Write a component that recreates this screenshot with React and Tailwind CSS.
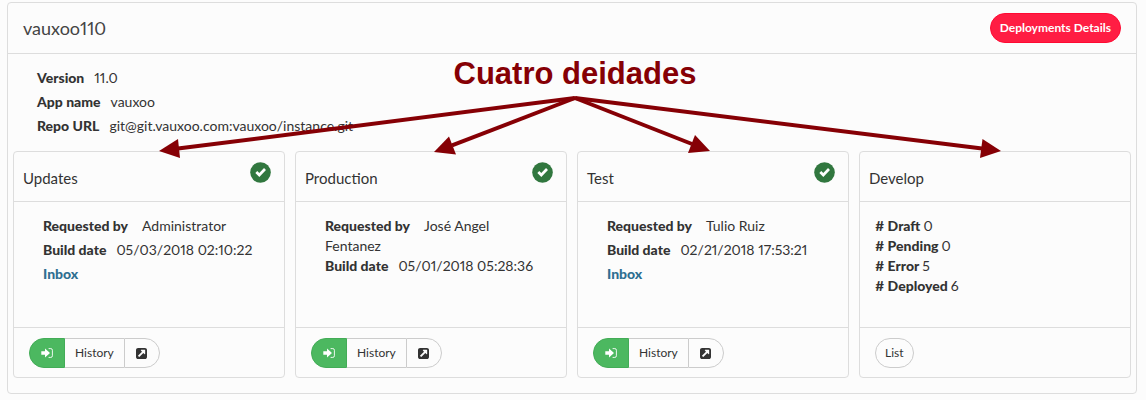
import React from 'react';

const environments = [
  {
    name: 'Updates',
    requestedBy: 'Administrator',
    buildDate: '05/03/2018 02:10:22',
    inbox: true,
  },
  {
    name: 'Production',
    requestedBy: 'José Angel Fentanez',
    buildDate: '05/01/2018 05:28:36',
    inbox: false,
  },
  {
    name: 'Test',
    requestedBy: 'Tulio Ruiz',
    buildDate: '02/21/2018 17:53:21',
    inbox: true,
  },
];

const developCounts = [
  { label: '# Draft', value: 0 },
  { label: '# Pending', value: 0 },
  { label: '# Error', value: 5 },
  { label: '# Deployed', value: 6 },
];

const arrows = [
  { line: '575,98 178,148.6', head: '159,151 178,139 180,158' },
  { line: '575,98 452,145.4', head: '434,152 449,136.5 456,154.5' },
  { line: '575,98 692,144', head: '710,151 695,135 688,153' },
  { line: '575,98 982,148.6', head: '1001,151 982.5,139 980,158' },
];

const CheckBadge = () => (
  <svg viewBox="0 0 21 21" className="size-[21px] shrink-0" role="img" aria-label="Deployed">
    <circle cx="10.5" cy="10.5" r="10.3" fill="#31773f" />
    <path d="M6.3 10 L9.3 13 L15 7" fill="none" stroke="#fff" strokeWidth="2.7" />
  </svg>
);

const SignInIcon = () => (
  <svg viewBox="0 0 12 10" className="h-2.5 w-3">
    <path d="M0.3 3.2 H4 V0.4 L9 5 L4 9.6 V6.8 H0.3 Z" fill="currentColor" />
    <path
      d="M7.6 0.6 H9.8 Q11.4 0.6 11.4 2.2 V7.8 Q11.4 9.4 9.8 9.4 H7.6"
      fill="none"
      stroke="currentColor"
      strokeWidth="0.9"
    />
  </svg>
);

const ExternalIcon = () => (
  <svg viewBox="0 0 1536 1536" className="size-[11px]" fill="currentColor">
    <path d="M1280 800V320q0-26-19-45t-45-19H736q-42 0-59 39-17 41 14 70l144 144-534 534q-19 19-19 45t19 45l102 102q19 19 45 19t45-19l534-534 144 144q18 19 45 19 12 0 25-5 39-17 39-59zm256-512v960q0 119-84.500 203.500T1248 1536H288q-119 0-203.500-84.500T0 1248V288Q0 169 84.500 84.500T288 0h960q119 0 203.500 84.500T1536 288z" />
  </svg>
);

const Field = ({ label, value, gap = 'mr-2.5' }) => (
  <p>
    <strong className={`font-black ${gap}`}>{label}</strong>
    {value}
  </p>
);

const Card = ({ title, badge, children, footer }) => (
  <section className="flex flex-col rounded border border-[#ddd]">
    <header className="flex h-[50px] items-start justify-between border-b border-[#ddd] pt-2.5 pr-[13px] pl-[9px]">
      <h2 className="pt-1.5 text-[15px] leading-5">{title}</h2>
      {badge}
    </header>
    <div className="min-h-[125px] grow">{children}</div>
    <footer className="flex border-t border-[#ddd] px-[15px] pt-2.5 pb-[9px]">{footer}</footer>
  </section>
);

const EnvironmentCard = ({ env }) => (
  <Card
    title={env.name}
    badge={<CheckBadge />}
    footer={
      <div className="flex h-[30px] text-xs">
        <button
          type="button"
          aria-label="Log in"
          className="flex w-9 items-center justify-center rounded-l-full border border-[#43ac57] bg-[#4cb860] text-white"
        >
          <SignInIcon />
        </button>
        <button type="button" className="border-y border-[#ccc] px-2.5">
          History
        </button>
        <button
          type="button"
          aria-label="Open"
          className="flex w-9 items-center justify-center rounded-r-full border border-[#ccc]"
        >
          <ExternalIcon />
        </button>
      </div>
    }
  >
    <div className={`flex flex-col px-[29px] pt-3.5 ${env.inbox ? 'gap-1' : ''}`}>
      <Field label="Requested by" value={env.requestedBy} gap="mr-3.5" />
      <Field label="Build date" value={env.buildDate} />
      {env.inbox && (
        <a href="#inbox" className="self-start font-black text-[#2f6f91]">
          Inbox
        </a>
      )}
    </div>
  </Card>
);

export default function App() {
  return (
    <div className="relative min-h-screen bg-[#fcfcfc] pt-0.5 pr-[9px] pb-1.5 pl-[7px] font-['Lato',sans-serif] text-sm leading-5 text-[#333] proportional-nums">
      <main className="rounded border border-[#ddd]">
        <header className="flex items-center justify-between border-b border-[#ddd] px-[15px] py-2.5">
          <h1 className="text-lg leading-5 text-[#444]">vauxoo110</h1>
          <button
            type="button"
            className="h-[30px] rounded-full border border-[#ff0a33] bg-[#ff1d43] px-[9px] text-xs font-bold text-white"
          >
            Deployments Details
          </button>
        </header>

        <div className="flex flex-col gap-1 px-[29px] pt-3.5 pb-[15px]">
          <Field label="Version" value="11.0" />
          <Field label="App name" value="vauxoo" />
          <Field label="Repo URL" value="git@git.vauxoo.com:vauxoo/instance.git" />
        </div>

        <div className="grid grid-cols-4 gap-2.5 px-[5px] pb-[15px]">
          {environments.map((env) => (
            <EnvironmentCard key={env.name} env={env} />
          ))}
          <Card
            title="Develop"
            footer={
              <button type="button" className="h-[30px] rounded-full border border-[#ccc] px-[9px] text-xs">
                List
              </button>
            }
          >
            <div className="px-[15px] pt-3.5">
              {developCounts.map((item) => (
                <Field key={item.label} label={item.label} value={item.value} gap="mr-[3px]" />
              ))}
            </div>
          </Card>
        </div>
      </main>

      {/* Annotation drawn over the panel */}
      <div className="pointer-events-none absolute inset-x-0 top-0 text-[#860005]">
        <svg viewBox="0 0 1146 400" className="w-full" fill="currentColor">
          {arrows.map((arrow) => (
            <g key={arrow.head}>
              <polyline points={arrow.line} fill="none" stroke="currentColor" strokeWidth="4" />
              <polygon points={arrow.head} />
            </g>
          ))}
        </svg>
        <p className="absolute inset-x-0 top-14 pl-1 text-center font-['Liberation_Sans',sans-serif] text-[31px] leading-9 font-bold">
          Cuatro deidades
        </p>
      </div>
    </div>
  );
}
